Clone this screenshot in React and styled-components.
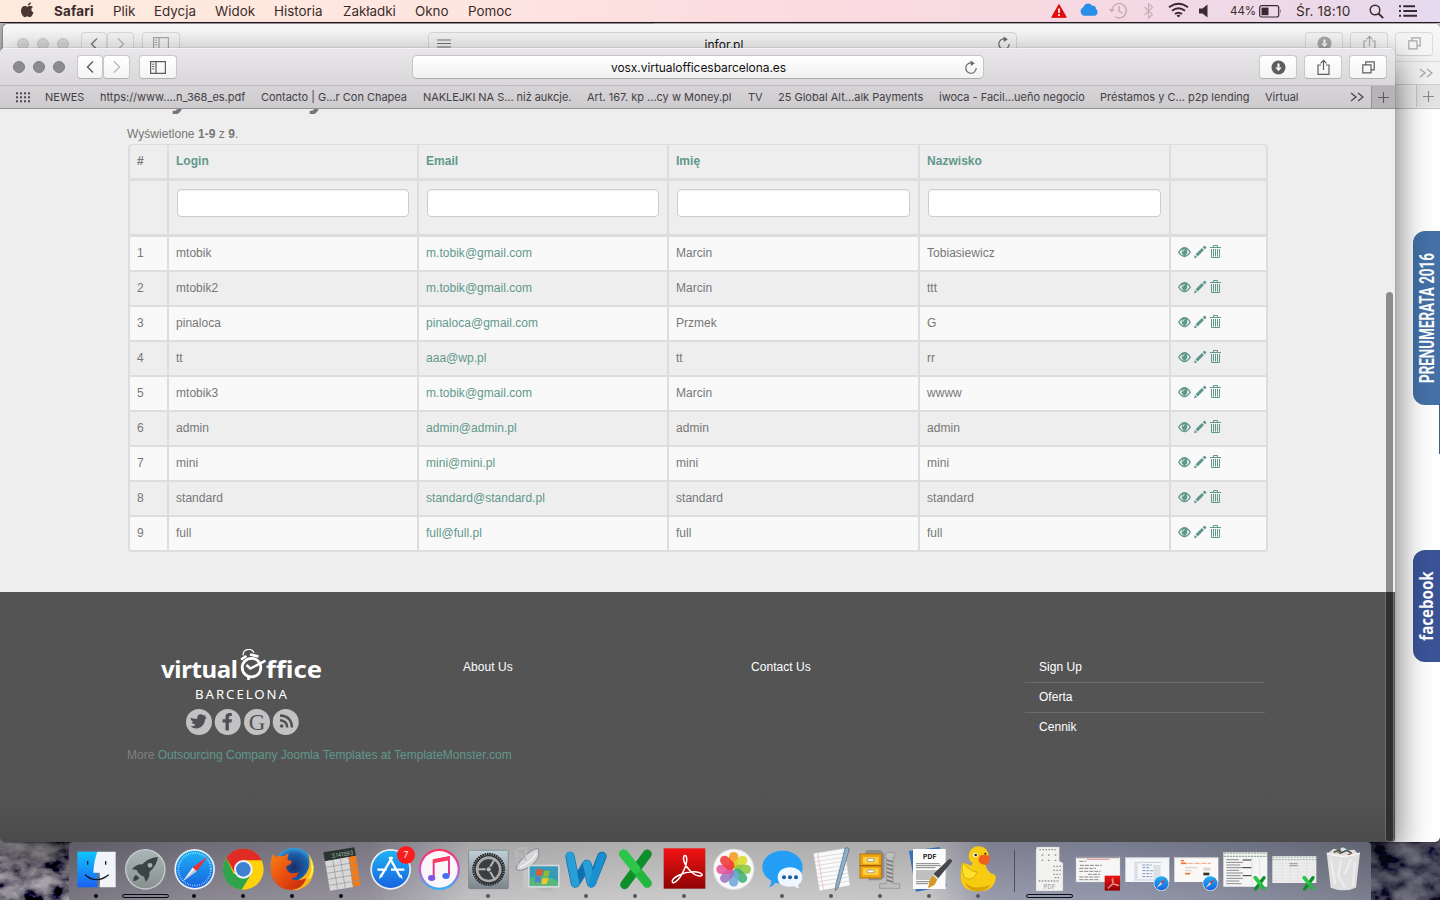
import React from 'react';
import styled, { createGlobalStyle, css } from 'styled-components';

const Global = createGlobalStyle`
  * { box-sizing: border-box; }
  body { margin: 0; width: 1440px; height: 900px; overflow: hidden; background: #25252f; }
`;

const ui = "Inter, 'Liberation Sans', sans-serif";
const page = "'Liberation Sans', Arial, sans-serif";
const teal = '#5f988b';

/* ---------- desktop ---------- */
const Desktop = styled.div`
  position: relative;
  width: 1440px;
  height: 900px;
  overflow: hidden;
  background: #25252f;
  font-family: ${ui};
`;
const Wallpaper = styled.svg`
  position: absolute;
  left: 0;
  bottom: 0;
  display: block;
`;

/* ---------- menu bar ---------- */
const MenuBar = styled.header`
  position: relative;
  display: flex;
  justify-content: space-between;
  height: 23px;
  border-bottom: 1px solid #2b1c24;
  background: linear-gradient(90deg, #fdebde 0, #fee5e0 480px, #fbdce0 760px, #f6d9e2 1080px, #ecd9e8 1300px, #e6daef 1440px);
  color: #3c2b2b;
`;
const MenuLeft = styled.nav`
  display: flex;
  align-items: center;
  padding-left: 20px;
`;
const MenuItem = styled.span`
  width: ${p => p.$w}px;
  font-size: 13.4px;
  line-height: 22px;
  white-space: nowrap;
  letter-spacing: ${p => p.$ls || 0}px;
  font-weight: ${p => (p.$bold ? 700 : 400)};
`;
const AppleSlot = styled.span`
  width: 34px;
  height: 22px;
`;
const MenuRight = styled.div`
  display: flex;
  align-items: center;
  width: 390px;
  height: 22px;
`;
const StatusSlot = styled.span`
  display: flex;
  width: ${p => p.$w}px;
  height: 22px;
  align-items: center;
  font-size: ${p => p.$size || 13}px;
  letter-spacing: ${p => p.$ls || 0}px;
  white-space: nowrap;
`;

/* ---------- windows ---------- */
const Window = styled.section`
  position: absolute;
  overflow: hidden;
  display: flex;
  flex-direction: column;
  ${p => p.$back ? css`
    left: 3px; top: 24px; width: 1437px; height: 818px;
    background: #fff;
    border-radius: 5px 5px 5px 0;
    box-shadow: 0 0 3px rgba(0,0,0,.6);
  ` : css`
    left: 0; top: 48px; width: 1395px; height: 794px;
    background: #eee;
    border-radius: 5px 5px 4px 4px;
    box-shadow: 0 0 1px rgba(0,0,0,.55), 0 14px 36px rgba(0,0,0,.62);
  `}
`;
const BehindStrip = styled.div`
  height: 30px;
  background: linear-gradient(90deg, #b4b2b3 0 652px, #d5d5d5 655px);
`;
const Toolbar = styled.div`
  display: grid;
  align-items: center;
  flex: none;
  ${p => p.$back ? css`
    grid-template-columns: 1fr 589px 1fr;
    height: 38px;
    padding: 2px 7px 0 8px;
    background: linear-gradient(#f9f9f9, #f0f0f0);
    border-bottom: 1px solid #dadada;
  ` : css`
    grid-template-columns: 1fr 572px 1fr;
    height: 37px;
    padding: 1px 8px 0;
    background: linear-gradient(#e9e7ea, #d9d7da);
    box-shadow: inset 0 1px #f4f3f5;
  `}
`;
const Cluster = styled.div`
  display: flex;
  align-items: center;
  justify-content: ${p => (p.$end ? 'flex-end' : 'flex-start')};
  gap: ${p => p.$gap}px;
  padding-left: ${p => p.$pad || 0}px;
`;
const Light = styled.i`
  width: 12px;
  height: 12px;
  border-radius: 50%;
  background: ${p => (p.$back ? '#d8d8d8' : '#8c8b90')};
  border: 1px solid ${p => (p.$back ? '#c9c9c9' : '#7d7c81')};
`;
const NavPair = styled.div`
  display: flex;
  gap: 0;
  margin: 0 ${p => (p.$back ? 0 : 1)}px 0 4px;
`;
const ToolButton = styled.button`
  display: flex;
  align-items: center;
  justify-content: center;
  width: ${p => p.$w || 38}px;
  height: 24px;
  padding: 0;
  border: 1px solid ${p => (p.$back ? '#dcdcdc' : '#c9c7ca')};
  border-bottom-color: ${p => (p.$back ? '#d2d2d2' : '#b1afb2')};
  border-radius: 4px;
  background: ${p => (p.$back ? '#f6f6f6' : 'linear-gradient(#fff, #f4f4f4)')};
  color: ${p => (p.$back ? '#a9a9a9' : '#5e5e5e')};
`;
const Address = styled.div`
  display: grid;
  grid-template-columns: 26px 1fr 19px;
  align-items: center;
  height: 24px;
  border: 1px solid ${p => (p.$back ? '#d8d8d8' : '#c6c4c7')};
  border-bottom-color: ${p => (p.$back ? '#d2d2d2' : '#aeacaf')};
  border-radius: 5px;
  background: ${p => (p.$back ? '#f5f5f5' : 'linear-gradient(#fff, #f1f1f1)')};
  color: #666;
`;
const AddressText = styled.span`
  text-align: center;
  padding: ${p => (p.$low ? '2px 3px 0 0' : '1px 5px 0 0')};
  font-size: 12px;
  letter-spacing: ${p => p.$ls || 0}px;
  line-height: 20px;
  color: #111;
`;
const Bookmarks = styled.nav`
  display: flex;
  align-items: center;
  flex: none;
  height: 24px;
  padding-left: 16px;
  border-top: 1px solid #bebcbf;
  border-bottom: 1px solid #949295;
  background: linear-gradient(#d6d4d7, #cdcbce);
`;
const GridSlot = styled.span`
  display: flex;
  flex: none;
  width: 29px;
`;
const Bookmark = styled.span`
  flex: none;
  width: ${p => p.$w}px;
  font-size: 11px;
  line-height: 22px;
  letter-spacing: ${p => p.$ls || 0}px;
  white-space: nowrap;
  color: #434145;
`;
const MoreSlot = styled.span`
  display: flex;
  flex: none;
  justify-content: center;
  width: 34px;
  padding-left: 6px;
`;
const NewTab = styled.span`
  display: flex;
  flex: none;
  align-items: center;
  justify-content: center;
  width: 24px;
  height: 22px;
  margin-left: ${p => (p.$back ? 'auto' : 0)};
  border-left: 1px solid ${p => (p.$back ? '#c6c6c6' : '#959396')};
  background: ${p => (p.$back ? '#e3e3e3' : '#b6b4b7')};
`;
const BackBookmarks = styled.div`
  display: flex;
  justify-content: flex-end;
  align-items: center;
  height: 23px;
  flex: none;
  padding-right: 7px;
  background: #f2f2f2;
  border-bottom: 1px solid #d0d0d0;
`;
const BackTabs = styled.div`
  display: flex;
  height: 24px;
  flex: none;
  background: #ececec;
  border-bottom: 1px solid #c2c2c2;
`;

/* ---------- side badges on the rear page ---------- */
const SideBadge = styled.div`
  position: absolute;
  right: 0;
  top: ${p => p.$top}px;
  width: 27px;
  height: ${p => p.$h}px;
  display: flex;
  align-items: center;
  justify-content: center;
  border-radius: 12px 0 0 12px;
  background: ${p => p.$bg};
`;
const SideLabel = styled.span`
  flex: none;
  color: #fff;
  font-family: ${p => p.$font};
  font-weight: 700;
  font-size: ${p => p.$size}px;
  white-space: nowrap;
  transform: rotate(-90deg) scaleX(${p => p.$sx});
`;
const ThinRule = styled.div`
  position: absolute;
  right: 0;
  top: 380px;
  width: 1px;
  height: 50px;
  background: #3b5f88;
`;

/* ---------- front page ---------- */
const Page = styled.main`
  flex: 1;
  display: flex;
  flex-direction: column;
  overflow: hidden;
  font-family: ${page};
  font-size: 12px;
  color: #777;
`;
const Content = styled.div`
  height: 483px;
  flex: none;
  padding: 0 127px;
`;
const Title = styled.h1`
  margin: -31px 0 0;
  height: 46px;
  font-size: 32px;
  line-height: 36px;
  padding-left: 5px;
  color: #777;
`;
const Summary = styled.div`
  height: 20px;
  line-height: 20px;
  letter-spacing: .03px;
`;
const Table = styled.div`
  width: 1140px;
  margin-left: 1px;
  padding: 1px 2px 2px;
  background: #ddd;
  border-radius: 4px;
  letter-spacing: .03px;
`;
const Row = styled.div`
  display: grid;
  grid-template-columns: 37px 248px 248px 249px 249px 95px;
  column-gap: 2px;
  height: ${p => p.$h || 33}px;
  margin-bottom: ${p => (p.$mb === undefined ? 2 : p.$mb)}px;
  > * { background: ${p => (p.$light ? '#f9f9f9' : '#eee')}; }
`;
const Cell = styled.div`
  padding: ${p => (p.$filter ? '8px' : '0 7px')};
  line-height: 32px;
  white-space: nowrap;
  font-weight: ${p => (p.$head ? 700 : 400)};
  color: ${p => (p.$link ? teal : '#777')};
  border-radius: ${p => p.$radius || 0};
`;
const FilterInput = styled.input`
  display: block;
  width: 100%;
  height: 28px;
  border: 1px solid #ccc;
  border-radius: 4px;
  background: #fff;
  box-shadow: inset 0 1px 1px rgba(0,0,0,.06);
`;
const Actions = styled.div`
  display: flex;
  align-items: flex-start;
  gap: 3px;
  padding: 7px 7px 0;
  color: ${teal};
`;
const Footer = styled.footer`
  flex: 1;
  padding: 57px 127px 0;
  background: linear-gradient(#545454 0, #545454 200px, #4b4b4b 100%);
`;
const FooterGrid = styled.div`
  display: grid;
  grid-template-columns: 322px 288px 288px 242px;
  height: 96px;
`;
const Brand = styled.div`
  padding-left: 33px;
`;
const FooterList = styled.div`
  padding-top: 3px;
`;
const FooterLink = styled.a`
  display: block;
  height: 30px;
  padding-left: 14px;
  line-height: 28px;
  letter-spacing: .04px;
  color: #fff;
  border-top: 1px solid ${p => (p.$rule ? '#6b6b6b' : 'transparent')};
  width: 240px;
`;
const Credit = styled.div`
  line-height: 20px;
  letter-spacing: .015px;
  color: #7f7f7f;
  a { color: ${teal}; }
`;
const ScrollThumb = styled.div`
  position: absolute;
  right: 2px;
  top: 244px;
  width: 7px;
  height: 549px;
  border-radius: 4px;
  background: linear-gradient(#8c8c8c 0 300px, #2f2f2f 300px);
  box-shadow: 0 0 0 1px rgba(255,255,255,.16);
`;

/* ---------- dock ---------- */
const Dock = styled.div`
  position: absolute;
  left: 69px;
  top: 842px;
  width: 1302px;
  height: 58px;
  display: flex;
  padding-left: 3px;
  border-radius: 4px 4px 0 0;
  background:
    linear-gradient(rgba(0,0,0,.1), rgba(255,255,255,.12)),
    linear-gradient(90deg, #686571 0, #7a7783 120px, #87838f 300px, #9c9aa4 345px, #b9b9bb 400px, #c3c3c3 600px, #bfbfc0 860px, #8b8da0 920px, #858aa0 1040px, #777c8e 1200px, #6a6e7e 100%);
`;
const Slot = styled.div`
  position: relative;
  width: 49px;
  height: 58px;
  flex: none;
  svg { display: block; }
`;
const Running = styled.i`
  position: absolute;
  left: 22px;
  bottom: 2px;
  width: 4px;
  height: 4px;
  border-radius: 50%;
  background: ${p => (p.$soft ? '#55555a' : '#0c0c1a')};
`;
const Progress = styled.i`
  position: absolute;
  left: 1px;
  bottom: 2px;
  width: 47px;
  height: 4px;
  border-radius: 2px;
  border: 1px solid #0c0c18;
`;
const Divider = styled.i`
  width: 1px;
  height: 42px;
  margin: 8px 10px 0 11px;
  background: #4d4f5c;
`;

/* ---------- small glyphs ---------- */
const Apple = () => (
  <svg width="16" height="22" viewBox="0 0 16 22" fill="#4a3632">
    <path d="M10.900 2.200c.2 1.600-1.300 3.500-3 3.400C7.700 4 9.200 2.400 10.900 2.200zM13 6.900c-1 .6-1.600 1.500-1.600 2.600 0 1.400.8 2.500 2.100 3C12.900 14.300 11.400 17.200 9.900 17.200c-.9 0-1.300-.6-2.500-.6s-1.700.6-2.500.6C3 17.200 1 13.700 1 10.800 1 7.900 2.800 6 4.700 6c1.100 0 1.900.7 2.700.7C8.200 6.700 9.200 5.900 10.600 6c.9 0 1.900.3 2.400.9z" />
  </svg>
);
const Chevron = ({ right, color }) => (
  <svg width="10" height="16" viewBox="0 0 10 16" fill="none" stroke={color} strokeWidth="1.400">
    <path d={right ? 'M2 2.500L7.500 8 2 13.500' : 'M8 2.500L2.500 8 8 13.500'} />
  </svg>
);
const Sidebar = ({ color = '#5e5e5e' }) => (
  <svg width="16" height="13" viewBox="0 0 16 13" fill="none" stroke={color}>
    <path d="M.6.6h14.800v11.800H.6zM6 1v11" strokeWidth="1.200" />
    <path d="M2 3.200h2.400M2 5.500h2.400M2 7.800h2.400" strokeWidth=".9" />
  </svg>
);
const Reload = () => (
  <svg width="14" height="15" viewBox="0 0 14 15" fill="none" stroke="#6a6a6a" strokeWidth="1.200">
    <path d="M8.200 3A5.200 5.200 0 1 0 12.200 8" />
    <path d="M6.600.6l4.200 2.600-3.900 2.800z" fill="#6a6a6a" stroke="none" />
  </svg>
);
const Download = () => (
  <svg width="15" height="15" viewBox="0 0 15 15">
    <circle cx="7.500" cy="7.500" r="7" fill="currentColor" />
    <path d="M7.500 3.600v4" stroke="#fff" strokeWidth="2" />
    <path d="M4.300 7.400h6.400L7.500 11.300z" fill="#fff" />
  </svg>
);
const Share = () => (
  <svg width="13" height="17" viewBox="0 0 13 17" fill="none" stroke="currentColor" strokeWidth="1.200">
    <path d="M4 6H1v9.400h11V6H9M6.500 11V1.500M3.500 4.300l3-3 3 3" />
  </svg>
);
const Tabs = () => (
  <svg width="13" height="13" viewBox="0 0 13 13" fill="none" stroke="currentColor" strokeWidth="1.200">
    <path d="M.8 3.800h8.200v8H.8zM3.800 3.500V.8h8.400v8H9.300" />
  </svg>
);
const Plus = ({ color = '#5d5b5f' }) => (
  <svg width="11" height="11" viewBox="0 0 11 11" stroke={color} strokeWidth="1.100"><path d="M5.500 0v11M0 5.500h11" /></svg>
);
const Double = ({ color = '#4c4a4e' }) => (
  <svg width="14" height="10" viewBox="0 0 14 10" fill="none" stroke={color} strokeWidth="1.400"><path d="M1 1l5 4-5 4M8 1l5 4-5 4" /></svg>
);
const DotGrid = () => (
  <svg width="15" height="11" viewBox="0 0 15 11" fill="#4a484c">
    {[0, 4, 8].map(y => [0, 4, 8, 12].map(x => <rect key={x + '-' + y} x={x} y={y + 0.300} width="2" height="2" />))}
  </svg>
);

const StatusIcons = () => (
  <svg width="162" height="22" viewBox="0 0 162 22">
    <path d="M9 4.500l7.300 12.800H1.700z" fill="#e00b0b" stroke="#e00b0b" strokeLinejoin="round" />
    <path d="M9 8.500v4.500M9 14.300v1.600" stroke="#fff" strokeWidth="1.700" />
    <path d="M34 15.800a4.500 4.500 0 0 1-.6-8.500c.5-4 6.600-5.500 8.600-1.500 3-.5 4.200 1.600 4 3.200 2.500 1.500 2 6.400-1.500 6.800z" fill="#2a8fe8" />
    <g fill="none" stroke="#c9aab5" strokeWidth="1.500">
      <path d="M62 10.500A7.200 7.200 0 1 1 65 16.500M69 6v5l3.500 2.500" />
      <path d="M58.500 9l3.300 3.500L65 9z" fill="#c9aab5" stroke="none" />
      <path d="M94.500 7l8 7.500-4 3.800V3.500l4 3.800-8 7.500" strokeWidth="1.100" />
    </g>
    <g fill="none" stroke="#3b2932" strokeWidth="2">
      <path d="M119 7.300q9.500-7.200 19 0M122 10.800q6.500-5 13 0M125 14q3.500-2.600 7 0" />
      <path d="M126.500 15.500l2 2 2-2q-2-1.400-4 0z" fill="#3b2932" stroke="none" />
    </g>
    <path d="M149 8.500h3.500l5-4v13l-5-4H149z" fill="#3b2932" />
  </svg>
);
const Battery = () => (
  <svg width="24" height="13" viewBox="0 0 24 13">
    <rect x=".7" y=".7" width="19" height="11.300" rx="2" fill="none" stroke="#3b2932" strokeWidth="1.200" />
    <rect x="2.500" y="2.600" width="7" height="7.600" fill="#3b2932" />
    <path d="M21.200 4q1.400 2.300 0 4.600z" fill="#3b2932" />
  </svg>
);
const Search = () => (
  <svg width="15" height="15" viewBox="0 0 15 15" fill="none" stroke="#3b2932"><circle cx="6" cy="6" r="4.800" strokeWidth="1.400" /><path d="M9.500 9.500l4.700 4.700" strokeWidth="1.900" /></svg>
);
const ListIcon = () => (
  <svg width="19" height="12" viewBox="0 0 19 12" stroke="#3b2932" strokeWidth="2"><path d="M0 1.200h2M0 6h2M0 10.800h2M4.300 1.200H16M4.300 6h13.700M4.300 10.800h13.700" /></svg>
);

/* ---------- row actions ---------- */
const Eye = () => (
  <svg width="13" height="16" viewBox="0 0 13 16">
    <path d="M0 8.200Q6.500-2 13 8.200 6.500 18.400 0 8.200z" fill={teal} />
    <path d="M1.500 8.200Q2.700 6.200 4.200 5.400 2.300 9.500 6.500 11.700 3.200 11.200 1.500 8.200zM11.500 8.200Q10.300 6.200 8.800 5.400 10.700 9.500 6.500 11.700 9.800 11.200 11.500 8.200z" fill="#f4f5f4" />
    <path d="M4.800 7.500q.2-1.700 1.700-2" stroke="#f4f5f4" fill="none" />
  </svg>
);
const Pencil = () => (
  <svg width="13" height="16" viewBox="0 0 13 16" fill={teal}>
    <path d="M0 14.200l.9-3.200 2.300 2.300zM1.600 10.300L7.900 4l2.100 2.100-6.300 6.300zM8.700 3.200l1.200-1.200q.6-.5 1.200 0l1 1q.5.6 0 1.200L10.800 5.300z" />
  </svg>
);
const Trash = () => (
  <svg width="11" height="16" viewBox="0 0 11 16" fill="none" stroke={teal}>
    <path d="M0 3.500h11M3.500 3V1.500h4V3M1.500 5v8.500h8V5M3.500 5v7.500M5.500 5v7.500M7.500 5v7.500" />
  </svg>
);

/* ---------- brand ---------- */
const Wordmark = styled.text`
  font-family: 'Noto Sans', 'Open Sans', sans-serif;
  font-variant-ligatures: none;
  font-weight: ${p => (p.$light ? 400 : 700)};
  font-size: ${p => (p.$light ? 13.2 : 24)}px;
  fill: #fff;
`;
const Logo = () => (
  <svg width="164" height="88" viewBox="0 0 164 88">
    <Wordmark x="1" y="29.400" textLength="77" lengthAdjust="spacing">virtual</Wordmark>
    <Wordmark x="106" y="29.400" textLength="56" lengthAdjust="spacingAndGlyphs">ffice</Wordmark>
    <Wordmark $light x="35" y="50" textLength="92">BARCELONA</Wordmark>
    <g fill="none" stroke="#fff">
      <circle cx="91.500" cy="18.600" r="9.300" strokeWidth="2.800" />
      <path d="M83.300 6.500C82-.5 92-1.500 94 3.800" strokeWidth="1.200" />
      <path d="M86.500 16l3.800 3.500L105.500 11.600" strokeWidth="2.400" />
      <path d="M88.500 28v3M81 10.500l5.500-3.500M90 5.500l8.500 2" strokeWidth="2.600" />
    </g>
    <g fill="#c2c2c4">
      {[39, 67.700, 97, 125.700].map(x => <circle key={x} cx={x} cy="73" r="13" />)}
    </g>
    <path d="M30.500 77.300q3.600.2 5.100-1.500-3.200-.5-4-2.800h1.700q-2.900-1.500-2.900-4.300l1.700.5q2.500.9 5.200.5-.5-4.200 3.600-4.400 1.600 0 2.700 1.200l2.400-.1-1 1.900 2 .7-1.900 1.300q-.2 5.200-4.600 7.900-5 3.100-10-.9z" fill="#505152" />
    <path d="M65.500 81.500v-8h-3v-3.300h3v-2.200q0-4 4.300-4h2v3.100h-1.400q-1.500 0-1.500 1.500v1.600h3.100l-.5 3.300H68.900v8z" fill="#505152" />
    <text x="88.700" y="80.500" fill="#505152" fontFamily="'Liberation Serif', serif" fontSize="23">G</text>
    <g fill="none" stroke="#505152" strokeWidth="2.400"><path d="M120 66.500q11.500.5 12 12M120 71.200q7 .5 7.200 7.300" /><circle cx="121.700" cy="77" r="1" fill="#505152" strokeWidth="1.600" /></g>
  </svg>
);

/* ---------- dock icons, drawn on a 3x grid ---------- */
const Art = ({ x, children }) => (
  <svg width="49" height="58" viewBox={`${x} 51 147 174`}>{children}</svg>
);
const SafariMark = ({ cx, cy, r }) => (
  <g>
    <circle cx={cx} cy={cy} r={r} fill="#eef0f2" />
    <circle cx={cx} cy={cy} r={r * 0.920} fill="url(#safariBlue)" />
    {r > 30 && <circle cx={cx} cy={cy} r={r * 0.800} fill="none" stroke="#c8ecff" strokeWidth="6" strokeDasharray="1.500 4" />}
    <g transform={`translate(${cx} ${cy}) rotate(45) scale(${r / 60})`}>
      <path d="M-8 0L0-54 8 0z" fill="#f32c2c" /><path d="M-8 0L0 50 8 0z" fill="#f4f4f4" /><path d="M0 0L8 0 0 50z" fill="#bfc5cb" />
    </g>
  </g>
);
const XMark = ({ cx, cy, s }) => (
  <g transform={`translate(${cx} ${cy}) scale(${s})`} strokeLinecap="round" strokeWidth="27">
    <path d="M35-46L-33 46" stroke="#0f8e2c" /><path d="M-36-46L35 42" stroke="#22b83e" /><path d="M-36-46L0-2" stroke="#2cc64a" />
  </g>
);
const AdobeMark = ({ x, y, s }) => (
  <g transform={`translate(${x} ${y}) scale(${s})`}>
    <rect width="125" height="121" fill="url(#adobeRed)" />
    <path d="M26 101c-4-12 34-32 65-31 24 1 31 12 18 13-17 1-42-24-48-44-5-18 6-24 8-10 3 22-20 67-38 74-2 1-4 0-5-2z" fill="none" stroke="#fff" strokeWidth="4.500" />
  </g>
);
const HiddenDefs = styled.svg`
  position: absolute;
`;
const Defs = () => (
  <HiddenDefs width="0" height="0" aria-hidden="true">
    <defs>
      <linearGradient id="safariBlue" x1="0" y1="0" x2="0" y2="1"><stop offset="0" stopColor="#1fb2f5" /><stop offset="1" stopColor="#1763e0" /></linearGradient>
      <linearGradient id="adobeRed" x1="0" y1="0" x2="0" y2="1"><stop offset="0" stopColor="#f21313" /><stop offset="1" stopColor="#8e0303" /></linearGradient>
      <linearGradient id="finderBlue" x1="0" y1="0" x2="0" y2="1"><stop offset="0" stopColor="#10c5fb" /><stop offset="1" stopColor="#1b62f4" /></linearGradient>
      <linearGradient id="steel" x1="0" y1="0" x2="0" y2="1"><stop offset="0" stopColor="#aab6b5" /><stop offset="1" stopColor="#87908f" /></linearGradient>
      <linearGradient id="itunes" x1="0" y1="0" x2="0" y2="1"><stop offset="0" stopColor="#fb3158" /><stop offset=".5" stopColor="#d054cf" /><stop offset="1" stopColor="#2fb5f5" /></linearGradient>
      <linearGradient id="prefs" x1="0" y1="0" x2="0" y2="1"><stop offset="0" stopColor="#c0d0d8" /><stop offset="1" stopColor="#7d858b" /></linearGradient>
      <radialGradient id="fox"><stop offset="0" stopColor="#1d2c67" /><stop offset=".7" stopColor="#1960ac" /><stop offset="1" stopColor="#3a9cda" /></radialGradient>
      <linearGradient id="foxFire" x1="0" y1="0" x2="1" y2="1"><stop offset="0" stopColor="#f98410" /><stop offset=".5" stopColor="#e94d10" /><stop offset="1" stopColor="#c1260c" /></linearGradient>
    </defs>
  </HiddenDefs>
);
const petals = ['#f79a1d', '#d9d928', '#8fc742', '#3fae77', '#6fa9dc', '#9a76bb', '#e2559b', '#ee3b37'];

const DockIcons = () => (
  <>
    <Slot><Art x={216}>
      <path d="M232 80h60v107h-60z" fill="url(#finderBlue)" /><path d="M292 80h55v107h-48q2-24 0-44h-19q2-36 12-63z" fill="#f1f4f8" />
      <path d="M263 108v11M317 108v11" stroke="#17233c" strokeWidth="4" /><path d="M255 149q34 30 71 0" fill="none" stroke="#10182c" strokeWidth="4" />
    </Art><Running /></Slot>
    <Slot><Art x={363}>
      <circle cx="436" cy="133" r="61" fill="#c6cfce" /><circle cx="436" cy="133" r="57" fill="url(#steel)" />
      <path d="M474 96q-30 2-47 22-18-1-31 15l15 2q-1 4 4 8l8 8q5 4 9 3l5 17q14-15 11-30 22-18 26-45zM408 150q-8 4-8 18 14-2 18-10z" fill="#3b4346" /><circle cx="450" cy="121" r="7" fill="#a4b0af" />
    </Art><Progress /></Slot>
    <Slot><Art x={510}><SafariMark cx={584} cy={133} r={61} /></Art><Running /></Slot>
    <Slot><Art x={657}>
      <circle cx="730" cy="133" r="61" fill="#fbd20b" />
      <path d="M701 146L679 99A61 61 0 0 0 725 194L754 146z" fill="#2fa44d" />
      <path d="M730 106H785A61 61 0 0 0 679 99L703 142z" fill="#e12b25" /><circle cx="730" cy="133" r="28" fill="#f3f3f3" /><circle cx="730" cy="133" r="22" fill="#3d81d0" />
    </Art><Running /></Slot>
    <Slot><Art x={804}>
      <circle cx="882" cy="127" r="59" fill="url(#fox)" />
      <path d="M925 84q26 40 10 78-18 34-58 34l-5-20q44-14 54-46 5-20-1-46z" fill="#f8b41a" />
      <path d="M929 95q14 42-8 70l12-8q18-30-4-62z" fill="#fff04a" />
      <path d="M818 87q4 8 10 9 14-6 24-3l14-10-4 21 14 5-4 9-13 6q0 18 16 21 12 0 21-3-4 17-22 18 10 12 45 0-12 34-46 35-48-2-60-50-4-34 5-58z" fill="url(#foxFire)" />
    </Art><Running /></Slot>
    <Slot><Art x={951}>
      <path d="M970 82l93-15 5 25-93 17z" fill="#29342f" /><path d="M975 109l71-13 14 90-70 11z" fill="#d7d7d7" /><path d="M1046 96l22-4 13 89-22 5z" fill="#f47a17" />
      <path d="M978 127l93-16M981 145l94-16M984 163l94-16M988 181l92-15M998 105l15 88M1021 101l15 88M1046 97l14 88" stroke="#929292" strokeWidth="2" />
      <text x="0" y="0" transform="translate(995 99) rotate(-9)" fill="#9eb4a5" fontFamily="Inter, sans-serif" fontSize="17" textLength="66">3.141593</text>
    </Art><Running /></Slot>
    <Slot><Art x={18}>
      <circle cx="92" cy="133" r="61" fill="#eee" /><circle cx="92" cy="133" r="56" fill="url(#safariBlue)" />
      <path d="M88 96L121 156M97 96L64 152M52 134h28M93 134h40" stroke="#fff" strokeWidth="7" fill="none" /><path d="M60 148l9 5-12 9zM116 153l9-4 3 14z" fill="#fff" />
      <circle cx="138" cy="90" r="27" fill="#fb1c1c" /><text x="138" y="99" textAnchor="middle" fill="#fff" fontFamily="Inter, sans-serif" fontSize="26">7</text>
    </Art></Slot>
    <Slot><Art x={165}>
      <circle cx="238" cy="133" r="62" fill="url(#itunes)" /><circle cx="238" cy="133" r="55" fill="#faf7fb" />
      <path d="M221 157v-51l46-9v53" fill="none" stroke="#e5398a" strokeWidth="6" /><path d="M219 103l50-9v12l-50 9z" fill="#fb3b60" /><ellipse cx="215" cy="159" rx="11" ry="9" fill="#7b59e0" /><ellipse cx="258" cy="153" rx="11" ry="9" fill="#496ff0" />
    </Art></Slot>
    <Slot><Art x={312}>
      <rect x="326" y="76" width="119" height="115" rx="3" fill="url(#prefs)" stroke="#737c82" strokeWidth="2" />
      <circle cx="386" cy="133" r="46" fill="none" stroke="#292b2d" strokeWidth="7" strokeDasharray="5 2" /><circle cx="386" cy="133" r="35" fill="#3c3f41" stroke="#aaa" strokeWidth="8" /><circle cx="386" cy="133" r="41" fill="none" stroke="#292b2d" strokeWidth="4" />
      <path d="M386 133L349 133M386 133L405 101M386 133L405 165" stroke="#b5b5b5" strokeWidth="6" /><circle cx="386" cy="133" r="8" fill="#bbb" stroke="#333" strokeWidth="3" />
    </Art><Running $soft /></Slot>
    <Slot><Art x={459}>
      <path d="M490 130l-2 62h36l-14-12-8-50z" fill="#c2c4c5" /><path d="M534 70q-22 4-44 28-22 24-22 34 10 10 36-4 26-16 32-36 2-14-2-22z" fill="#d5d7d9" stroke="#85898c" strokeWidth="3" /><path d="M464 79l36 26M466 76l8 44M500 66l-6 40M470 74l26-6" stroke="#b9bcbe" strokeWidth="4" fill="none" /><path d="M480 126q30-10 50-42" stroke="#f4f4f4" strokeWidth="4" fill="none" />
      <path d="M534 190l40-4 8 10-42 2z" fill="#b5b7b8" /><rect x="504" y="119" width="95" height="69" fill="#d5d9dc" /><rect x="509" y="124" width="85" height="58" fill="#3899b8" /><path d="M509 160q45-16 85 10v12h-85z" fill="#57b879" />
      <path d="M531 134q9-4 18 1l-4 18q-9-5-18-1z" fill="#e9572a" /><path d="M553 136q8 4 17 0l-4 18q-9 4-17 0z" fill="#86bd3a" /><path d="M526 156q9-4 18 1l-3 17q-9-5-18-1z" fill="#4b83cf" /><path d="M548 158q8 4 17 0l-4 18q-8 4-17 0z" fill="#f5c52c" />
    </Art></Slot>
    <Slot><Art x={606}>
      <g fill="none" strokeLinecap="round" strokeLinejoin="round"><path d="M630 94L646 174 681 118 694 174 726 94" stroke="#116fae" strokeWidth="28" /><path d="M630 92L646 174M681 118L694 174" stroke="#289ed7" strokeWidth="24" /><path d="M726 94L697 174" stroke="#1c8fd0" strokeWidth="22" /></g>
    </Art><Running $soft /></Slot>
    <Slot><Art x={753}><XMark cx={827} cy={133} s={1} /></Art><Running $soft /></Slot>
    <Slot><Art x={900}><AdobeMark x={911} y={70} s={1} /></Art><Running $soft /></Slot>
    <Slot><Art x={-3}>
      <circle cx="71" cy="133" r="62" fill="#dedede" /><circle cx="71" cy="133" r="59" fill="#f8f8f8" />
      {petals.map((c, i) => <rect key={c} x="57" y="81" width="28" height="50" rx="14" fill={c} opacity=".88" transform={`rotate(${i * 45} 71 133)`} />)}
    </Art></Slot>
    <Slot><Art x={144}>
      <path d="M218 77c34 0 60 22 60 49s-26 50-60 50q-12 0-22-3-8 12-19 13 8-8 7-19-27-14-27-41c0-27 27-49 61-49z" fill="#239ff6" />
      <path d="M240 127c22 0 37 13 37 30q0 14-13 23 0 7 5 10-10 0-16-6-50 6-50-27c0-17 15-30 37-30z" fill="#eef7ff" /><g fill="#185b9c"><circle cx="222" cy="157" r="6" /><circle cx="240" cy="157" r="6" /><circle cx="258" cy="157" r="6" /></g>
    </Art><Running $soft /></Slot>
    <Slot><Art x={291}>
      <path d="M310 85l94-15 17 112-93 16z" fill="#fafafa" stroke="#bcbcbc" strokeWidth="2" /><path d="M313 98l92-14M315 110l92-14M317 122l92-14M319 134l92-14M321 146l92-14M323 158l92-14M325 170l92-14M327 182l92-14" stroke="#c9cdd3" strokeWidth="2" /><path d="M323 84l17 110" stroke="#edaaaa" strokeWidth="2" />
      <path d="M405 70q7-5 13 2l-33 115-9 11 1-17z" fill="#8eb0c9" stroke="#506579" strokeWidth="2" />
    </Art><Running $soft /></Slot>
    <Slot><Art x={438}>
      <path d="M463 87l8-12h42l10 12v70l-12 9h-35z" fill="#8d8d8d" /><rect x="450" y="87" width="64" height="72" fill="#eda316" stroke="#ba7408" strokeWidth="3" /><path d="M450 122h64" stroke="#9e6004" strokeWidth="4" /><path d="M459 96h47v20h-47zM459 130h47v20h-47z" fill="#ffcf40" /><path d="M472 101h20v8h-20zM472 135h20v8h-20z" fill="#fff" stroke="#886" strokeWidth="2" />
      <path d="M530 82h24v16h-5v78h20v14h-60v-14h20V98h-6z" fill="#bebebe" stroke="#8a8a8a" strokeWidth="2" /><path d="M531 105l17 6M531 117l17 6M531 129l17 6M531 141l17 6M531 153l17 6M531 165l17 6" stroke="#777" strokeWidth="4" />
    </Art><Running $soft /></Slot>
    <Slot><Art x={585}>
      <path d="M597 78l92-12 21 118-92 16z" fill="#3970bc" /><path d="M609 72h98v120h-98z" fill="#fbfbfb" /><text x="639" y="101" fontFamily="Inter, sans-serif" fontWeight="700" fontSize="20" fill="#111" textLength="40">PDF</text>
      <path d="M618 116h70M618 122h75M618 128h58M618 138h72M618 144h70M618 150h65M618 156h60M618 162h50M618 170h44M618 176h36" stroke="#6c6c6c" strokeWidth="2.500" />
      <path d="M715 104q8-5 12 5l-44 53-15-13z" fill="#45464b" /><path d="M668 149l15 13-9 17-20 11 5-24z" fill="#d69926" /><path d="M668 148l16 14" stroke="#ddd" strokeWidth="5" />
    </Art><Running $soft /></Slot>
    <Slot><Art x={732}>
      <path d="M776 93q3-29 31-29 29 2 29 32 0 14-9 24 4 20 18 26 9-1 13 9-4 43-52 44-45 0-53-32-3-30 4-54 14 1 25 9 5-2 6-8-12-7-12-21z" fill="#f6cb10" /><path d="M757 113q-3 34 10 47 25 8 35-19-18 1-45-28z" fill="#ffdf29" stroke="#c89905" strokeWidth="2" /><path d="M763 171q26 28 78 9-12 18-37 18-30 0-41-27z" fill="#dba006" />
      <path d="M810 91q18-3 29 2l-1 18-10 9q-20-2-23-15z" fill="#f15f1c" /><circle cx="796" cy="90" r="7" fill="#fff" /><circle cx="797" cy="90" r="4" fill="#222" /><circle cx="826" cy="86" r="3" fill="#222" />
    </Art><Running $soft /></Slot>
    <Divider />
    <Slot><Art x={945}>
      <path d="M980 66h68v42l11 6v84h-81V76z" fill="#f2f2f0" stroke="#aaa" strokeWidth="1" /><path d="M988 74h52M995 90h8M1014 90h8M1034 90h8M995 106h8M1014 106h8M1034 106h8M1030 124h24M1030 136h24M1030 148h22M1034 158h18M986 168h62" stroke="#969696" strokeWidth="4" strokeDasharray="5 4" /><text x="1001" y="192" fill="#929292" fontFamily="Inter, sans-serif" fontSize="17" textLength="35">PDF</text>
    </Art><Progress /></Slot>
    <Slot><Art x={12}>
      <path d="M18 96h132v75H18z" fill="#f6f6f6" stroke="#c9c9c9" /><path d="M19 98h129" stroke="#9a9a9a" strokeWidth="4" /><path d="M50 103h68" stroke="#d65c5c" strokeWidth="2" /><path d="M28 109h20M30 121h65M28 130h50M28 139h64M54 148h36M28 156h62M28 164h58" stroke="#747474" strokeWidth="2.500" strokeDasharray="12 3" /><AdobeMark x={104} y={152} s={0.370} />
    </Art></Slot>
    <Slot><Art x={159}>
      <path d="M166 96h132v75H166z" fill="#f5f6f9" /><path d="M168 98h130" stroke="#b7bdc8" strokeWidth="3" /><path d="M193 112h82M193 165h66" stroke="#c9cdd4" strokeWidth="3" /><path d="M193 112h10v52h-10zM250 120h22v44h-22z" fill="#dedfe5" /><path d="M217 120h28M217 128h22M217 137h32M217 146h28M217 155h30" stroke="#8293c2" strokeWidth="3" strokeDasharray="9 3" /><SafariMark cx={274} cy={175} r={23} />
    </Art></Slot>
    <Slot><Art x={306}>
      <path d="M313 96h132v75H313z" fill="#fbf9f7" /><path d="M315 98h130" stroke="#bbb" strokeWidth="3" /><path d="M332 107h10" stroke="#f0783c" strokeWidth="4" /><path d="M333 115h90" stroke="#f4a37e" strokeWidth="3" strokeDasharray="16 4" /><path d="M333 115h16" stroke="#ee722d" strokeWidth="5" /><path d="M345 146h16" stroke="#f0783c" strokeWidth="5" /><path d="M345 128h36M345 137h20" stroke="#bbb" strokeWidth="2" /><rect x="400" y="128" width="21" height="9" fill="#ddd5ce" /><rect x="400" y="143" width="18" height="8" fill="#33302f" /><SafariMark cx={421} cy={175} r={23} />
    </Art></Slot>
    <Slot><Art x={453}>
      <path d="M460 81h132v104H460z" fill="#f5f5f5" /><path d="M461 84h131M461 94h131" stroke="#9ab09d" strokeWidth="4" strokeDasharray="7 2" /><path d="M469 104h37M469 112h50M469 120h42M469 128h50M469 136h38M469 144h50M469 152h43M469 160h50M469 168h39M469 176h45" stroke="#8b8b8b" strokeWidth="3" /><path d="M518 105h27M518 128h27M518 152h27" stroke="#333" strokeWidth="3" /><path d="M546 99v83M569 99v83" stroke="#d9d9d9" strokeWidth="2" /><XMark cx={569} cy={175} s={0.370} />
    </Art></Slot>
    <Slot><Art x={600}>
      <path d="M607 93h132v81H607z" fill="#eee" /><path d="M608 96h131M608 104h131" stroke="#97ab9b" strokeWidth="3" strokeDasharray="6 3" /><path d="M610 114h125M610 123h125M610 132h125M610 141h125M610 150h125M610 159h125M610 168h125M637 110v63M661 110v63M684 110v63M710 110v63" stroke="#d1d1d1" /><path d="M658 116h25M658 122h25" stroke="#a5a5a5" strokeWidth="4" /><XMark cx={716} cy={175} s={0.370} />
    </Art></Slot>
    <Slot><Art x={747}>
      <path d="M774 84l17-13 14 4 13-8 18 9 17-2 12 14-14 9-65-2z" fill="#dfdfe0" /><path d="M791 82l18-7 3 9 19-8 14 9" fill="none" stroke="#3a4f48" strokeWidth="5" /><path d="M800 79l11 6M832 91l14-7" stroke="#a46139" strokeWidth="4" />
      <path d="M770 84q49 20 100 0l-12 104q-37 16-76 0z" fill="#dfdfdf" /><path d="M783 105l12 72M813 103l-8 50 20 35M844 102l-20 45M855 111l-7 72" fill="none" stroke="#f2f2f2" strokeWidth="7" opacity=".65" /><path d="M770 84q49 20 100 0" fill="none" stroke="#fafafa" strokeWidth="4" />
    </Art></Slot>
  </>
);

const bookmarks = [
  ['NEWES', 55], ['https://www....n_368_es.pdf', 161], ['Contacto | G...r Con Chapea', 162, -0.020],
  ['NAKLEJKI NA S... niż aukcje.', 164, -0.050], ['Art. 167. kp ...cy w Money.pl', 161], ['TV', 30],
  ['25 Global Alt...alk Payments', 161], ['iwoca - Facil...ueño negocio', 161, -0.020],
  ['Préstamos y C... p2p lending', 165], ['Virtual', 72],
];
const users = [
  ['mtobik', 'm.tobik@gmail.com', 'Marcin', 'Tobiasiewicz'],
  ['mtobik2', 'm.tobik@gmail.com', 'Marcin', 'ttt'],
  ['pinaloca', 'pinaloca@gmail.com', 'Przmek', 'G'],
  ['tt', 'aaa@wp.pl', 'tt', 'rr'],
  ['mtobik3', 'm.tobik@gmail.com', 'Marcin', 'wwww'],
  ['admin', 'admin@admin.pl', 'admin', 'admin'],
  ['mini', 'mini@mini.pl', 'mini', 'mini'],
  ['standard', 'standard@standard.pl', 'standard', 'standard'],
  ['full', 'full@full.pl', 'full', 'full'],
];

const WindowControls = ({ back }) => (
  <Cluster $gap={8} $pad={back ? 6 : 5}>
    <Light $back={back} /><Light $back={back} /><Light $back={back} />
    <NavPair $back={back}>
      <ToolButton $w={26} $back={back}><Chevron color={back ? '#777' : '#5c5c5c'} /></ToolButton>
      <ToolButton $w={27} $back={back}><Chevron right color="#b9b9b9" /></ToolButton>
    </NavPair>
    <ToolButton $back={back}><Sidebar color={back ? '#aaa' : undefined} /></ToolButton>
  </Cluster>
);
const WindowActions = ({ back }) => (
  <Cluster $gap={7} $end>
    <ToolButton $back={back}><Download /></ToolButton>
    <ToolButton $back={back}><Share /></ToolButton>
    <ToolButton $back={back}><Tabs /></ToolButton>
  </Cluster>
);

export default function App() {
  return (
    <Desktop>
      <Global />
      <Defs />
      <Wallpaper width="1440" height="60" viewBox="0 0 1440 60">
        <defs>
          <filter id="rock" x="0" y="0" width="1" height="1">
            <feTurbulence type="fractalNoise" baseFrequency=".04 .06" numOctaves="5" seed="8" />
            <feColorMatrix values="1.100 0 0 0 -.34  1.050 0 0 0 -.33  1.050 0 0 0 -.29  0 0 0 0 1" />
          </filter>
        </defs>
        <rect width="70" height="60" filter="url(#rock)" />
        <rect x="1370" width="70" height="60" filter="url(#rock)" />
        <rect x="1370" width="70" height="60" fill="#10142c" opacity=".45" />
      </Wallpaper>
      <MenuBar>
        <MenuLeft>
          <AppleSlot><Apple /></AppleSlot>
          <MenuItem $w={59} $bold $ls={0.200}>Safari</MenuItem>
          <MenuItem $w={41}>Plik</MenuItem>
          <MenuItem $w={61}>Edycja</MenuItem>
          <MenuItem $w={59}>Widok</MenuItem>
          <MenuItem $w={69}>Historia</MenuItem>
          <MenuItem $w={72}>Zakładki</MenuItem>
          <MenuItem $w={53}>Okno</MenuItem>
          <MenuItem $w={50}>Pomoc</MenuItem>
        </MenuLeft>
        <MenuRight>
          <StatusSlot $w={180}><StatusIcons /></StatusSlot>
          <StatusSlot $w={29} $size={11.500}>44%</StatusSlot>
          <StatusSlot $w={37}><Battery /></StatusSlot>
          <StatusSlot $w={73} $size={13.600} $ls={0.200}>Śr. 18:10</StatusSlot>
          <StatusSlot $w={30}><Search /></StatusSlot>
          <StatusSlot $w={30}><ListIcon /></StatusSlot>
        </MenuRight>
      </MenuBar>
      <BehindStrip />

      <Window $back>
        <Toolbar $back>
          <WindowControls back />
          <Address $back>
            <Cluster $gap={0}><svg width="26" height="10" viewBox="0 0 26 10" stroke="#777" strokeWidth="1.200"><path d="M8 1h14M8 4.500h14M8 8h14" /></svg></Cluster>
            <AddressText $low>infor.pl</AddressText>
            <Reload />
          </Address>
          <WindowActions back />
        </Toolbar>
        <BackBookmarks><Double color="#aaa" /></BackBookmarks>
        <BackTabs><NewTab $back><Plus color="#888" /></NewTab></BackTabs>
        <SideBadge $top={207} $h={174} $bg="#4471a7"><SideLabel $font="Roboto, sans-serif" $size={20} $sx={0.670}>PRENUMERATA 2016</SideLabel></SideBadge>
        <ThinRule />
        <SideBadge $top={526} $h={112} $bg="#3b5498"><SideLabel $font="'Open Sans', sans-serif" $size={18} $sx={0.840}>facebook</SideLabel></SideBadge>
      </Window>

      <Window>
        <Toolbar>
          <WindowControls />
          <Address><span /><AddressText $ls={-0.060}>vosx.virtualofficesbarcelona.es</AddressText><Reload /></Address>
          <WindowActions />
        </Toolbar>
        <Bookmarks>
          <GridSlot><DotGrid /></GridSlot>
          {bookmarks.map(([t, w, ls]) => <Bookmark key={t} $w={w} $ls={ls}>{t}</Bookmark>)}
          <MoreSlot><Double /></MoreSlot>
          <NewTab $back={false}><Plus /></NewTab>
        </Bookmarks>
        <Page>
          <Content>
            <Title>Użytkownicy</Title>
            <Summary>Wyświetlone <b>1-9</b> z <b>9</b>.</Summary>
            <Table>
              <Row $mb={3}>
                <Cell $head $radius="3px 0 0 0">#</Cell>
                {['Login', 'Email', 'Imię', 'Nazwisko'].map(t => <Cell key={t} $head $link>{t}</Cell>)}
                <Cell $radius="0 3px 0 0" />
              </Row>
              <Row $h={53} $mb={3}>
                <Cell />
                {[1, 2, 3, 4].map(n => <Cell key={n} $filter><FilterInput /></Cell>)}
                <Cell />
              </Row>
              {users.map(([login, email, first, last], i) => (
                <Row key={login} $light={i % 2 === 0} $mb={i === 8 ? 0 : 2}>
                  <Cell>{i + 1}</Cell>
                  <Cell>{login}</Cell>
                  <Cell $link>{email}</Cell>
                  <Cell>{first}</Cell>
                  <Cell>{last}</Cell>
                  <Actions><Eye /><Pencil /><Trash /></Actions>
                </Row>
              ))}
            </Table>
          </Content>
          <Footer>
            <FooterGrid>
              <Brand><Logo /></Brand>
              <FooterList><FooterLink>About Us</FooterLink></FooterList>
              <FooterList><FooterLink>Contact Us</FooterLink></FooterList>
              <FooterList>
                <FooterLink>Sign Up</FooterLink>
                <FooterLink $rule>Oferta</FooterLink>
                <FooterLink $rule>Cennik</FooterLink>
              </FooterList>
            </FooterGrid>
            <Credit>More <a>Outsourcing Company Joomla Templates at TemplateMonster.com</a></Credit>
          </Footer>
        </Page>
        <ScrollThumb />
      </Window>

      <Dock><DockIcons /></Dock>
    </Desktop>
  );
}
